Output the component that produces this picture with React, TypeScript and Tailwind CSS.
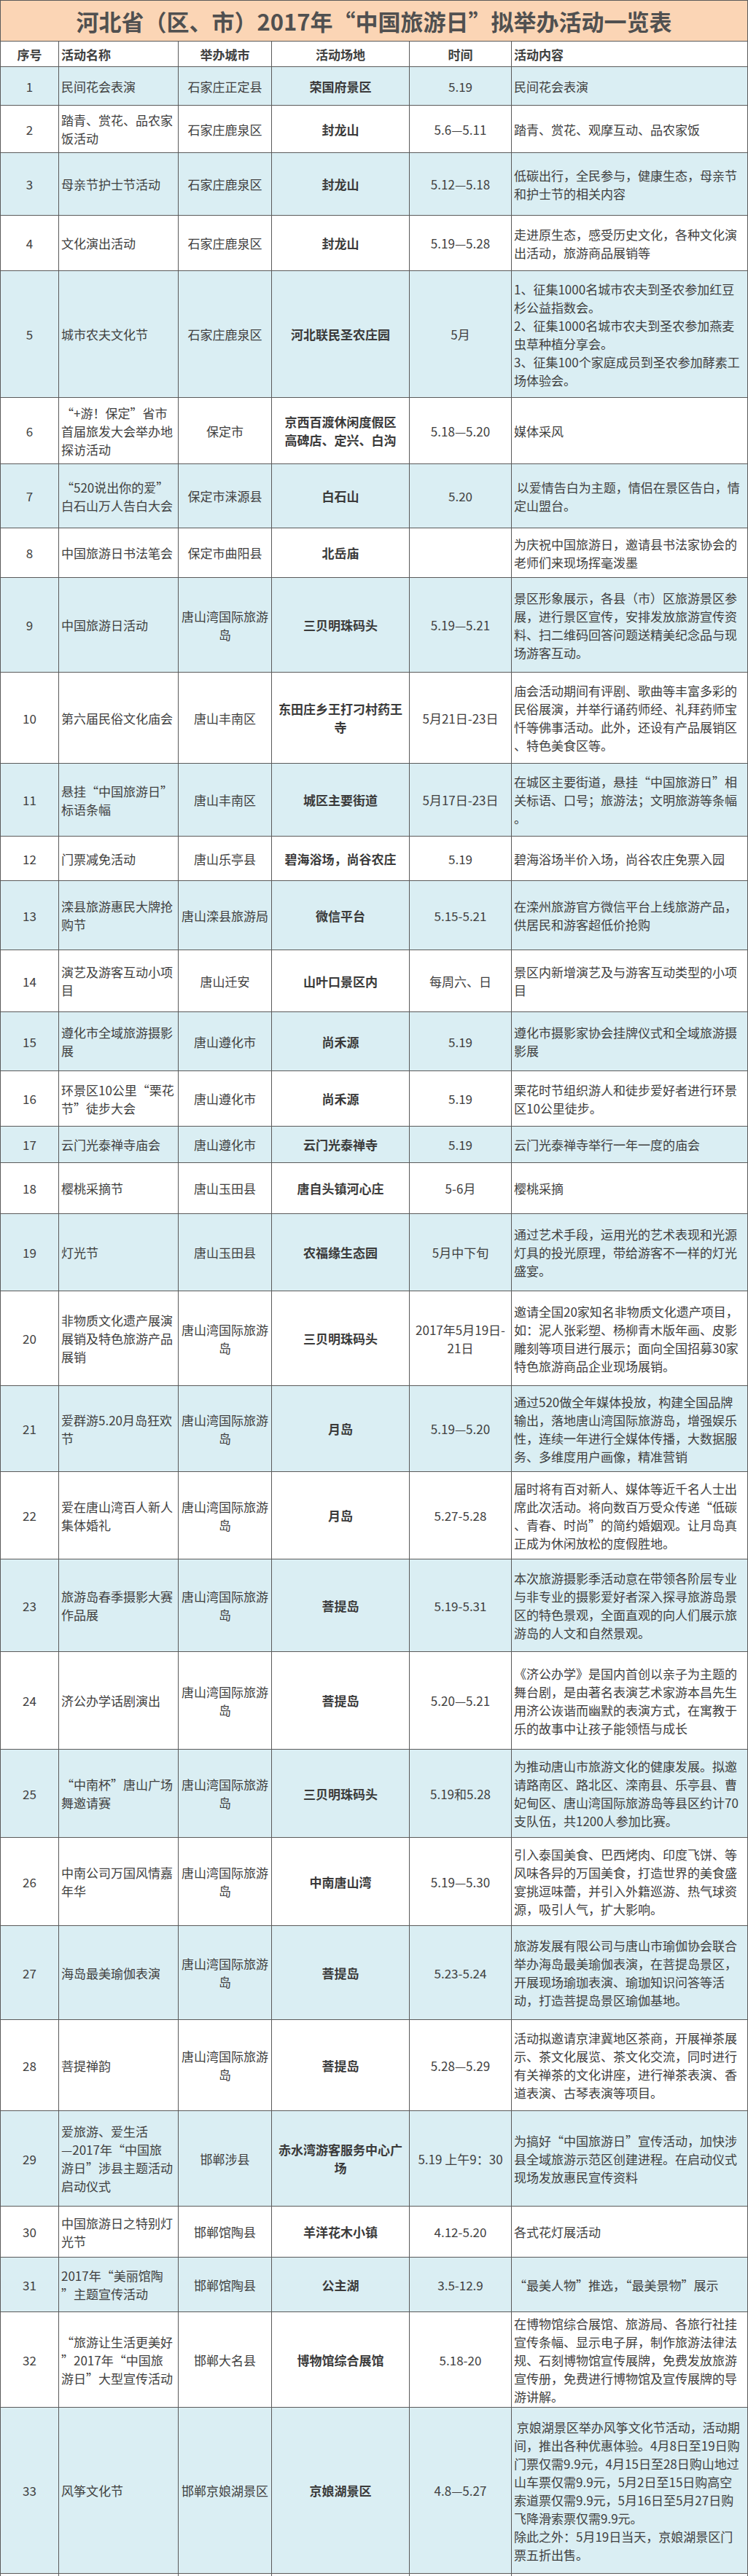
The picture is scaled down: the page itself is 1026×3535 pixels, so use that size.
type Row = {
  no: number;
  h: string;
  name: string[];
  city: string[];
  venue: string[];
  time: string[];
  content: string[];
};

const rows: Row[] = [
  { no: 1, h: 'h-[53px]', name: ['民间花会表演'], city: ['石家庄正定县'], venue: ['荣国府景区'], time: ['5.19'], content: ['民间花会表演'] },
  { no: 2, h: 'h-[65px]', name: ['踏青、赏花、品农家', '饭活动'], city: ['石家庄鹿泉区'], venue: ['封龙山'], time: ['5.6—5.11'], content: ['踏青、赏花、观摩互动、品农家饭'] },
  { no: 3, h: 'h-[86px]', name: ['母亲节护士节活动'], city: ['石家庄鹿泉区'], venue: ['封龙山'], time: ['5.12—5.18'], content: ['低碳出行，全民参与，健康生态，母亲节', '和护士节的相关内容'] },
  { no: 4, h: 'h-[76px]', name: ['文化演出活动'], city: ['石家庄鹿泉区'], venue: ['封龙山'], time: ['5.19—5.28'], content: ['走进原生态，感受历史文化，各种文化演', '出活动，旅游商品展销等'] },
  {
    no: 5, h: 'h-[174px]', name: ['城市农夫文化节'], city: ['石家庄鹿泉区'], venue: ['河北联民圣农庄园'], time: ['5月'],
    content: ['1、征集1000名城市农夫到圣农参加红豆', '杉公益指数会。', '2、征集1000名城市农夫到圣农参加燕麦', '虫草种植分享会。', '3、征集100个家庭成员到圣农参加酵素工', '场体验会。'],
  },
  { no: 6, h: 'h-[91px]', name: ['“+游！保定”省市', '首届旅发大会举办地', '探访活动'], city: ['保定市'], venue: ['京西百渡休闲度假区', '高碑店、定兴、白沟'], time: ['5.18—5.20'], content: ['媒体采风'] },
  { no: 7, h: 'h-[88px]', name: ['“520说出你的爱”', '白石山万人告白大会'], city: ['保定市涞源县'], venue: ['白石山'], time: ['5.20'], content: [' 以爱情告白为主题，情侣在景区告白，情', '定山盟台。'] },
  { no: 8, h: 'h-[68px]', name: ['中国旅游日书法笔会'], city: ['保定市曲阳县'], venue: ['北岳庙'], time: [], content: ['为庆祝中国旅游日，邀请县书法家协会的', '老师们来现场挥毫泼墨'] },
  {
    no: 9, h: 'h-[130px]', name: ['中国旅游日活动'], city: ['唐山湾国际旅游', '岛'], venue: ['三贝明珠码头'], time: ['5.19—5.21'],
    content: ['景区形象展示，各县（市）区旅游景区参', '展，进行景区宣传，安排发放旅游宣传资', '料、扫二维码回答问题送精美纪念品与现', '场游客互动。'],
  },
  {
    no: 10, h: 'h-[125px]', name: ['第六届民俗文化庙会'], city: ['唐山丰南区'], venue: ['东田庄乡王打刁村药王', '寺'], time: ['5月21日-23日'],
    content: ['庙会活动期间有评剧、歌曲等丰富多彩的', '民俗展演，并举行诵药师经、礼拜药师宝', '忏等佛事活动。此外，还设有产品展销区', '、特色美食区等。'],
  },
  {
    no: 11, h: 'h-[100px]', name: ['悬挂“中国旅游日”', '标语条幅'], city: ['唐山丰南区'], venue: ['城区主要街道'], time: ['5月17日-23日'],
    content: ['在城区主要街道，悬挂“中国旅游日”相', '关标语、口号；旅游法；文明旅游等条幅', '。'],
  },
  { no: 12, h: 'h-[61px]', name: ['门票减免活动'], city: ['唐山乐亭县'], venue: ['碧海浴场，尚谷农庄'], time: ['5.19'], content: ['碧海浴场半价入场，尚谷农庄免票入园'] },
  { no: 13, h: 'h-[95px]', name: ['滦县旅游惠民大牌抢', '购节'], city: ['唐山滦县旅游局'], venue: ['微信平台'], time: ['5.15-5.21'], content: ['在滦州旅游官方微信平台上线旅游产品，', '供居民和游客超低价抢购'] },
  { no: 14, h: 'h-[85px]', name: ['演艺及游客互动小项', '目'], city: ['唐山迁安'], venue: ['山叶口景区内'], time: ['每周六、日'], content: ['景区内新增演艺及与游客互动类型的小项', '目'] },
  { no: 15, h: 'h-[81px]', name: ['遵化市全域旅游摄影', '展'], city: ['唐山遵化市'], venue: ['尚禾源'], time: ['5.19'], content: ['遵化市摄影家协会挂牌仪式和全域旅游摄', '影展'] },
  { no: 16, h: 'h-[76px]', name: ['环景区10公里“栗花', '节”徒步大会'], city: ['唐山遵化市'], venue: ['尚禾源'], time: ['5.19'], content: ['栗花时节组织游人和徒步爱好者进行环景', '区10公里徒步。'] },
  { no: 17, h: 'h-[50px]', name: ['云门光泰禅寺庙会'], city: ['唐山遵化市'], venue: ['云门光泰禅寺'], time: ['5.19'], content: ['云门光泰禅寺举行一年一度的庙会'] },
  { no: 18, h: 'h-[70px]', name: ['樱桃采摘节'], city: ['唐山玉田县'], venue: ['唐自头镇河心庄'], time: ['5-6月'], content: ['樱桃采摘'] },
  {
    no: 19, h: 'h-[106px]', name: ['灯光节'], city: ['唐山玉田县'], venue: ['农福缘生态园'], time: ['5月中下旬'],
    content: ['通过艺术手段，运用光的艺术表现和光源', '灯具的投光原理，带给游客不一样的灯光', '盛宴。'],
  },
  {
    no: 20, h: 'h-[130px]', name: ['非物质文化遗产展演', '展销及特色旅游产品', '展销'], city: ['唐山湾国际旅游', '岛'], venue: ['三贝明珠码头'], time: ['2017年5月19日-', '21日'],
    content: ['邀请全国20家知名非物质文化遗产项目，', '如：泥人张彩塑、杨柳青木版年画、皮影', '雕刻等项目进行展示；面向全国招募30家', '特色旅游商品企业现场展销。'],
  },
  {
    no: 21, h: 'h-[118px]', name: ['爱群游5.20月岛狂欢', '节'], city: ['唐山湾国际旅游', '岛'], venue: ['月岛'], time: ['5.19—5.20'],
    content: ['通过520做全年媒体投放，构建全国品牌', '输出，落地唐山湾国际旅游岛，增强娱乐', '性，连续一年进行全媒体传播，大数据服', '务、多维度用户画像，精准营销'],
  },
  {
    no: 22, h: 'h-[120px]', name: ['爱在唐山湾百人新人', '集体婚礼'], city: ['唐山湾国际旅游', '岛'], venue: ['月岛'], time: ['5.27-5.28'],
    content: ['届时将有百对新人、媒体等近千名人士出', '席此次活动。将向数百万受众传递“低碳', '、青春、时尚”的简约婚姻观。让月岛真', '正成为休闲放松的度假胜地。'],
  },
  {
    no: 23, h: 'h-[127px]', name: ['旅游岛春季摄影大赛', '作品展'], city: ['唐山湾国际旅游', '岛'], venue: ['菩提岛'], time: ['5.19-5.31'],
    content: ['本次旅游摄影季活动意在带领各阶层专业', '与非专业的摄影爱好者深入探寻旅游岛景', '区的特色景观，全面直观的向人们展示旅', '游岛的人文和自然景观。'],
  },
  {
    no: 24, h: 'h-[134px]', name: ['济公办学话剧演出'], city: ['唐山湾国际旅游', '岛'], venue: ['菩提岛'], time: ['5.20—5.21'],
    content: ['《济公办学》是国内首创以亲子为主题的', '舞台剧，是由著名表演艺术家游本昌先生', '用济公诙谐而幽默的表演方式，在寓教于', '乐的故事中让孩子能领悟与成长'],
  },
  {
    no: 25, h: 'h-[121px]', name: ['“中南杯”唐山广场', '舞邀请赛'], city: ['唐山湾国际旅游', '岛'], venue: ['三贝明珠码头'], time: ['5.19和5.28'],
    content: ['为推动唐山市旅游文化的健康发展。拟邀', '请路南区、路北区、滦南县、乐亭县、曹', '妃甸区、唐山湾国际旅游岛等县区约计70', '支队伍，共1200人参加比赛。'],
  },
  {
    no: 26, h: 'h-[121px]', name: ['中南公司万国风情嘉', '年华'], city: ['唐山湾国际旅游', '岛'], venue: ['中南唐山湾'], time: ['5.19—5.30'],
    content: ['引入泰国美食、巴西烤肉、印度飞饼、等', '风味各异的万国美食，打造世界的美食盛', '宴挑逗味蕾，并引入外籍巡游、热气球资', '源，吸引人气，扩大影响。'],
  },
  {
    no: 27, h: 'h-[129px]', name: ['海岛最美瑜伽表演'], city: ['唐山湾国际旅游', '岛'], venue: ['菩提岛'], time: ['5.23-5.24'],
    content: ['旅游发展有限公司与唐山市瑜伽协会联合', '举办海岛最美瑜伽表演，在菩提岛景区，', '开展现场瑜珈表演、瑜珈知识问答等活', '动，打造菩提岛景区瑜伽基地。'],
  },
  {
    no: 28, h: 'h-[125px]', name: ['菩提禅韵'], city: ['唐山湾国际旅游', '岛'], venue: ['菩提岛'], time: ['5.28—5.29'],
    content: ['活动拟邀请京津冀地区茶商，开展禅茶展', '示、茶文化展览、茶文化交流，同时进行', '有关禅茶的文化讲座，进行禅茶表演、香', '道表演、古琴表演等项目。'],
  },
  {
    no: 29, h: 'h-[131px]', name: ['爱旅游、爱生活', '—2017年“中国旅', '游日”涉县主题活动', '启动仪式'], city: ['邯郸涉县'], venue: ['赤水湾游客服务中心广', '场'], time: ['5.19 上午9：30'],
    content: ['为搞好“中国旅游日”宣传活动，加快涉', '县全域旅游示范区创建进程。在启动仪式', '现场发放惠民宣传资料'],
  },
  { no: 30, h: 'h-[70px]', name: ['中国旅游日之特别灯', '光节'], city: ['邯郸馆陶县'], venue: ['羊洋花木小镇'], time: ['4.12-5.20'], content: ['各式花灯展活动'] },
  { no: 31, h: 'h-[75px]', name: ['2017年“美丽馆陶', '”主题宣传活动'], city: ['邯郸馆陶县'], venue: ['公主湖'], time: ['3.5-12.9'], content: ['“最美人物”推选，“最美景物”展示'] },
  {
    no: 32, h: 'h-[131px]', name: ['“旅游让生活更美好', '”2017年“中国旅', '游日”大型宣传活动'], city: ['邯郸大名县'], venue: ['博物馆综合展馆'], time: ['5.18-20'],
    content: ['在博物馆综合展馆、旅游局、各旅行社挂', '宣传条幅、显示电子屏，制作旅游法律法', '规、石刻博物馆宣传展牌，免费发放旅游', '宣传册，免费进行博物馆及宣传展牌的导', '游讲解。'],
  },
  {
    no: 33, h: 'h-[228px]', name: ['风筝文化节'], city: ['邯郸京娘湖景区'], venue: ['京娘湖景区'], time: ['4.8—5.27'],
    content: [' 京娘湖景区举办风筝文化节活动，活动期', '间，推出各种优惠体验。4月8日至19日购', '门票仅需9.9元，4月15日至28日购山地过', '山车票仅需9.9元，5月2日至15日购高空', '索道票仅需9.9元，5月16日至5月27日购', '飞降滑索票仅需9.9元。', '除此之外：5月19日当天，京娘湖景区门', '票五折出售。'],
  },
];

function Lines({ lines }: { lines: string[] }) {
  return (
    <>
      {lines.map((l, i) => (
        <div key={i} className="whitespace-pre">
          {l}
        </div>
      ))}
    </>
  );
}

const cell = 'border border-[#5a5a5a] px-[3px] py-0 align-middle';

export default function App() {
  return (
    <div className="w-[1026px] bg-white font-['Noto_Sans_CJK_SC','Noto_Sans',sans-serif] text-[17px] leading-[25px] text-[#404040]">
      <table className="w-full table-fixed border-collapse">
        <colgroup>
          <col className="w-[80px]" />
          <col className="w-[164px]" />
          <col className="w-[128px]" />
          <col className="w-[189px]" />
          <col className="w-[140px]" />
          <col />
        </colgroup>
        <tbody>
          {/* Title */}
          <tr className="h-[56px]">
            <td
              colSpan={6}
              className="border border-[#5a5a5a] bg-[#fbd5b5] text-center align-middle text-[31px] font-bold leading-[40px] text-[#505050]"
            >
              河北省（区、市）2017年“中国旅游日”拟举办活动一览表
            </td>
          </tr>

          {/* Header */}
          <tr className="h-[35px] font-bold">
            <td className={`${cell} text-center`}>序号</td>
            <td className={`${cell} text-left`}>活动名称</td>
            <td className={`${cell} text-center`}>举办城市</td>
            <td className={`${cell} text-center`}>活动场地</td>
            <td className={`${cell} text-center`}>时间</td>
            <td className={`${cell} text-left`}>活动内容</td>
          </tr>

          {rows.map((r) => (
            <tr key={r.no} className={`${r.h} ${r.no % 2 === 1 ? 'bg-[#daeef3]' : 'bg-white'}`}>
              <td className={`${cell} text-center`}>{r.no}</td>
              <td className={`${cell} text-left`}>
                <Lines lines={r.name} />
              </td>
              <td className={`${cell} text-center`}>
                <Lines lines={r.city} />
              </td>
              <td className={`${cell} text-center font-bold text-[#3a3a3a]`}>
                <Lines lines={r.venue} />
              </td>
              <td className={`${cell} text-center`}>
                <Lines lines={r.time} />
              </td>
              <td className={`${cell} text-left`}>
                <Lines lines={r.content} />
              </td>
            </tr>
          ))}

          {/* cut-off next row */}
          <tr className="h-[4px]">
            <td className="border-x border-t border-[#5a5a5a] p-0" />
            <td className="border-x border-t border-[#5a5a5a] p-0" />
            <td className="border-x border-t border-[#5a5a5a] p-0" />
            <td className="border-x border-t border-[#5a5a5a] p-0" />
            <td className="border-x border-t border-[#5a5a5a] p-0" />
            <td className="border-x border-t border-[#5a5a5a] p-0" />
          </tr>
        </tbody>
      </table>
    </div>
  );
}
